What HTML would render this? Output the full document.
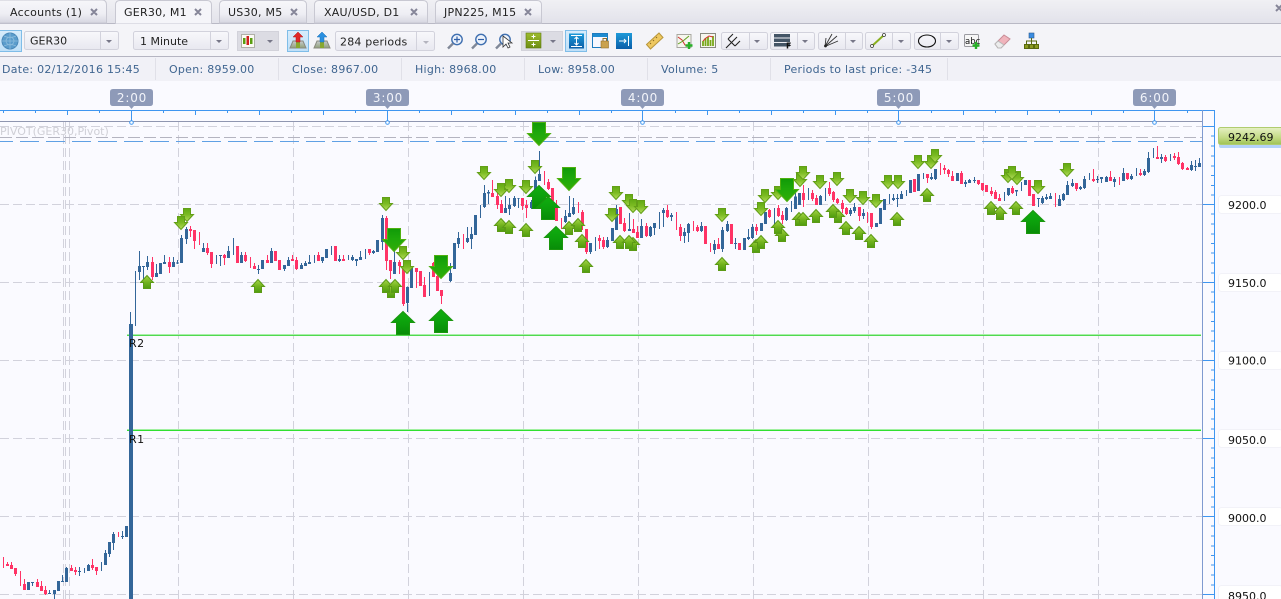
<!DOCTYPE html>
<html><head><meta charset="utf-8"><title>Chart</title>
<style>
html,body{margin:0;padding:0;background:#fafaff;width:1281px;height:599px;overflow:hidden}
svg{display:block;position:absolute;left:0;top:0}
text{font-family:"DejaVu Sans","Liberation Sans",sans-serif;font-size:11px}
.t{fill:#222}
.tt{fill:#222;letter-spacing:.25px}
.i{fill:#3f6590;letter-spacing:.27px}
.x{stroke:#858598;stroke-width:2;fill:none}
.btn{fill:url(#bg);stroke:#d2d2dc}
.sep{stroke:#d2d2dc}
.ar{fill:#777788}
.tl{fill:#f2f4fa;font-size:12px;letter-spacing:.8px;text-anchor:middle}
.pl{fill:#111;font-size:11px}
</style></head><body>
<svg width="1281" height="599" viewBox="0 0 1281 599" xmlns="http://www.w3.org/2000/svg">
<defs>
<linearGradient id="tb" x1="0" y1="0" x2="0" y2="1"><stop offset="0" stop-color="#f0f0f4"/><stop offset="1" stop-color="#e2e2ea"/></linearGradient>
<linearGradient id="tab" x1="0" y1="0" x2="0" y2="1"><stop offset="0" stop-color="#f7f7fa"/><stop offset=".6" stop-color="#eeeef4"/><stop offset="1" stop-color="#d6d6e0"/></linearGradient>
<linearGradient id="bg" x1="0" y1="0" x2="0" y2="1"><stop offset="0" stop-color="#f8f8fb"/><stop offset="1" stop-color="#e8e8f0"/></linearGradient>
<linearGradient id="hl" x1="0" y1="0" x2="0" y2="1"><stop offset="0" stop-color="#d8ecfb"/><stop offset="1" stop-color="#bfe0f8"/></linearGradient>
<linearGradient id="gd" x1="0" y1="0" x2="0" y2="1"><stop offset="0" stop-color="#62aa14"/><stop offset=".5" stop-color="#7dbc24"/><stop offset="1" stop-color="#b6de5e"/></linearGradient>
<linearGradient id="gu" x1="0" y1="0" x2="0" y2="1"><stop offset="0" stop-color="#a6d84a"/><stop offset=".5" stop-color="#74b41e"/><stop offset="1" stop-color="#4f9c10"/></linearGradient>
<linearGradient id="bd" x1="0" y1="0" x2="0" y2="1"><stop offset="0" stop-color="#109a08"/><stop offset=".45" stop-color="#1ea80a"/><stop offset="1" stop-color="#30ae08"/></linearGradient>
<linearGradient id="bu" x1="0" y1="0" x2="0" y2="1"><stop offset="0" stop-color="#10ae10"/><stop offset=".5" stop-color="#0ca00c"/><stop offset="1" stop-color="#088c08"/></linearGradient>
<linearGradient id="pg" x1="0" y1="0" x2="0" y2="1"><stop offset="0" stop-color="#e6f0c4"/><stop offset=".6" stop-color="#c2da84"/><stop offset="1" stop-color="#9fc254"/></linearGradient>
<linearGradient id="blu" x1="0" y1="0" x2="0" y2="1"><stop offset="0" stop-color="#1e9ad8"/><stop offset="1" stop-color="#0a5ea8"/></linearGradient>
<linearGradient id="grn" x1="0" y1="0" x2="0" y2="1"><stop offset="0" stop-color="#9dbb2e"/><stop offset="1" stop-color="#6e8e14"/></linearGradient>
<linearGradient id="sl" x1="0" y1="0" x2="0" y2="1"><stop offset="0" stop-color="#c8ccd0"/><stop offset="1" stop-color="#90a078"/></linearGradient>
<g id="sd"><polygon points="3.5,.5 10.5,.5 10.5,6.5 13.5,6.5 7,13.5 .5,6.5 3.5,6.5" fill="url(#gd)" stroke="#639f18"/></g>
<g id="su"><polygon points="3.5,13.5 10.5,13.5 10.5,7.5 13.5,7.5 7,.5 .5,7.5 3.5,7.5" fill="url(#gu)" stroke="#5c9a16"/></g>
<g id="bdn"><polygon points="5.5,.5 18.5,.5 18.5,11.5 23.5,11.5 12,23.5 .5,11.5 5.5,11.5" fill="url(#bd)" stroke="#4fb010"/></g>
<g id="bup"><polygon points="5.5,23.5 18.5,23.5 18.5,11.5 23.5,11.5 12,.5 .5,11.5 5.5,11.5" fill="url(#bu)" stroke="#1a960e"/></g>
<g id="mag"><circle cx="10" cy="6.5" r="5.2" fill="#eef3fb" stroke="#3f6fb0" stroke-width="1.4"/><path d="M6 10.5L1 15.5" stroke="#808898" stroke-width="2.4"/></g>
<g id="house"><path d="M1 14L4 7H14L17 14Z" fill="url(#sl)" stroke="#8a8a80"/><rect x="7" y="8" width="4" height="6" fill="#88a830"/></g>
</defs>

<!-- chart background -->
<rect width="1281" height="599" fill="#fafaff"/>

<!-- tab bar -->
<rect width="1281" height="24" fill="url(#tb)"/>
<path d="M0 23.5H1281" stroke="#b9b9c5"/>
<path d="M-2 23V0H102Q106.500 0 106.500 5V23Z" fill="url(#tab)" stroke="#c8c8d2"/>
<path d="M219.500 23V5Q219.500 .5 224 .5H302Q306.500 .5 306.500 5V23Z" fill="url(#tab)" stroke="#c8c8d2"/>
<path d="M314.500 23V5Q314.500 .5 319 .5H423Q427.500 .5 427.500 5V23Z" fill="url(#tab)" stroke="#c8c8d2"/>
<path d="M435.500 23V5Q435.500 .5 440 .5H537Q541.500 .5 541.500 5V23Z" fill="url(#tab)" stroke="#c8c8d2"/>
<path d="M115.500 24V5Q115.500 .5 120 .5H207Q211.500 .5 211.500 5V24Z" fill="#f5f5f9" stroke="#c8c8d2"/>
<text x="10" y="16" class="tt">Accounts (1)</text>
<text x="124" y="16" class="tt">GER30, M1</text>
<text x="228" y="16" class="tt">US30, M5</text>
<text x="324" y="16" class="tt">XAU/USD, D1</text>
<text x="444" y="16" class="tt">JPN225, M15</text>
<path class="x" d="M91 9l6 6m0-6l-6 6M195 9l6 6m0-6l-6 6M291 9l6 6m0-6l-6 6M411 9l6 6m0-6l-6 6M525 9l6 6m0-6l-6 6M1276 5l6 6m0-6l-6 6"/>

<!-- toolbar -->
<rect y="24" width="1281" height="32" fill="#f4f4f8"/>
<path d="M0 56.500H1281" stroke="#b5b5c2"/>
<rect x="-2" y="30.500" width="23.500" height="21" fill="url(#hl)" stroke="#7fbde8"/>
<circle cx="10" cy="41" r="8" fill="#5a9ccc" stroke="#4a88b8"/>
<path d="M10 33V49M2 41H18M4 36Q10 39 16 36M4 46Q10 43 16 46" stroke="#8cbcdc" fill="none" stroke-width=".8"/>
<circle cx="10" cy="41" r="4" fill="none" stroke="#8cbcdc" stroke-width=".8"/>

<rect x="24.500" y="31.500" height="18" width="94" rx="2" class="btn"/><path class="sep" d="M100.500 32V49"/><path class="ar" d="M106 40h6l-3 3z"/>
<text x="30" y="44.500" class="t">GER30</text>
<rect x="133.500" y="31.500" height="18" width="95" rx="2" class="btn"/><path class="sep" d="M210.500 32V49"/><path class="ar" d="M216 40h6l-3 3z"/>
<text x="140" y="45" class="t">1 Minute</text>
<rect x="237.500" y="31.500" width="41" height="19" fill="#dcdce3" stroke="#d2d2da"/>
<rect x="241.500" y="34.500" width="13" height="13" fill="#fbfbf4" stroke="#b0b0a8"/>
<rect x="243" y="38" width="2.500" height="6" fill="#5a9e10"/><rect x="246.500" y="36" width="2.500" height="9" fill="#d02020"/><rect x="250" y="38" width="2.500" height="6" fill="#5a9e10"/>
<path class="ar" d="M267 40h6l-3 3z"/>

<rect x="287.500" y="30.500" width="21" height="21" fill="url(#hl)" stroke="#7fbde8"/>
<use href="#house" x="289" y="34"/><path d="M298 32l5 5h-3v5h-4v-5h-3z" fill="#e02828" stroke="#b01818" stroke-width=".5"/>
<use href="#house" x="313" y="34"/><path d="M322 32l5 5h-3v5h-4v-5h-3z" fill="#2a90e0" stroke="#1a70b8" stroke-width=".5"/>
<rect x="335.500" y="31.500" height="19" width="99" rx="2" class="btn"/><path class="sep" d="M416.500 32V50"/><path class="ar" d="M423 41h6l-3 3z" fill-opacity=".5"/>
<text x="340" y="45.500" class="t" style="letter-spacing:.2px">284 periods</text>

<use href="#mag" x="447" y="33"/><path d="M457 36.500v6M454 39.500h6" stroke="#2f5fa8" stroke-width="1.200"/>
<use href="#mag" x="471" y="33"/><path d="M478 39.500h6" stroke="#2f5fa8" stroke-width="1.200"/>
<use href="#mag" x="495" y="33"/><path d="M503 36l0 11 3-3 2 4 2-1-2-4h4z" fill="#fff" stroke="#333" stroke-width=".8"/>

<rect x="521.500" y="31.500" width="41" height="19" fill="#dcdce3" stroke="#d2d2da"/>
<rect x="526" y="33" width="15" height="15" fill="url(#grn)" stroke="#5e7a10" stroke-width=".6"/>
<path d="M528 40.500H539" stroke="#fff"/><path d="M533.500 34.500v4M531.500 36.500h4M533.500 42.500v4M531.500 44.500h4" stroke="#fff"/>
<path class="ar" d="M550 40h6l-3 3z"/>
<rect x="565.500" y="30.500" width="21" height="21" fill="url(#hl)" stroke="#7fbde8"/>
<rect x="569" y="33.500" width="15" height="15" fill="url(#blu)"/>
<path d="M571 35.500H582M571 46.500H582M576.500 37v8M574.500 39l2-2 2 2M574.500 43l2 2 2-2" stroke="#fff" fill="none"/>
<rect x="592.500" y="33.500" width="15" height="14" fill="#f8f8ff" stroke="#1f7cc0"/><rect x="593" y="34" width="14" height="3" fill="#1f8cd0"/>
<rect x="601" y="41" width="7.500" height="7" fill="#caa24e" stroke="#93702a" stroke-width=".6"/><path d="M603 41v-2.500h3.500V41" fill="none" stroke="#93702a"/>
<rect x="616" y="33" width="16" height="16" fill="url(#blu)"/>
<path d="M619 41H626M624 39l2 2-2 2M628.500 36V46" stroke="#fff" fill="none"/>
<path d="M646.500 44.500L659 33l4 4.500L650.500 49Z" fill="#eec860" stroke="#b8963c"/>
<path d="M651 44l-1-1M654 41l-1-1M657 38l-1-1" stroke="#8a6a20"/>
<rect x="677" y="34.500" width="14" height="13" fill="#f6f6ee" stroke="#a8a8a0"/>
<path d="M678 37l4 3 3 5 3 1" stroke="#d03030" fill="none"/><path d="M678 44l5-3 6-5" stroke="#60a020" fill="none"/>
<path d="M689 42v7M685.500 45.500h7" stroke="#28b028" stroke-width="2.400"/>
<rect x="700.500" y="33.500" width="15" height="14" fill="#f6f6ee" stroke="#8a8a80"/>
<path d="M703 46v-5M705.500 46v-8M708 46v-9M710.500 46v-6M713 46v-10" stroke="#78a818" stroke-width="1.800"/><path d="M703 41l3-3 3-2 4 1" stroke="#d83030" fill="none"/>

<rect x="721.500" y="32.500" width="46" height="17" rx="2" class="btn"/><path class="sep" d="M749.500 33V49"/><path class="ar" d="M754 40h6l-3 3z"/>
<path d="M726 48L731.500 42.500M728 39L735 46M728 39L733 34M731.500 42.500L737 37M735 46L740 41" stroke="#222" fill="none" stroke-width="1.100"/>
<rect x="770.500" y="32.500" width="44" height="17" rx="2" class="btn"/><path class="sep" d="M797.500 33V49"/><path class="ar" d="M802 40h6l-3 3z"/>
<rect x="774" y="34" width="16" height="3.500" fill="#445566"/><rect x="774" y="38.500" width="16" height="3.500" fill="#445566"/><rect x="774" y="43" width="16" height="3.500" fill="#445566"/>
<text x="786" y="48.500" style="font-size:8px;font-weight:bold" fill="#111">F</text>
<rect x="818.500" y="32.500" width="44" height="17" rx="2" class="btn"/><path class="sep" d="M845.500 33V49"/><path class="ar" d="M850 40h6l-3 3z"/>
<path d="M825 46.500L838 41M825 46.500L837 36M825 46.500L832 34M825 46.500L826 38" stroke="#333" fill="none" stroke-width=".9"/><circle cx="825.500" cy="46" r="1.400" fill="#222"/>
<rect x="865.500" y="32.500" width="45" height="17" rx="2" class="btn"/><path class="sep" d="M892.500 33V49"/><path class="ar" d="M898 40h6l-3 3z"/>
<path d="M872 46L884 35" stroke="#8ab020" stroke-width="2"/><circle cx="872" cy="46" r="1.500" fill="#fff" stroke="#333" stroke-width=".7"/><circle cx="884" cy="35" r="1.500" fill="#fff" stroke="#333" stroke-width=".7"/>
<rect x="914.500" y="32.500" width="44" height="17" rx="2" class="btn"/><path class="sep" d="M940.500 33V49"/><path class="ar" d="M946 40h6l-3 3z"/>
<ellipse cx="927" cy="41" rx="8.500" ry="6" fill="none" stroke="#111" stroke-width="1.100"/>
<rect x="964.500" y="34.500" width="14" height="12" rx="1" fill="#f6f6f6" stroke="#9a9aa0"/>
<text x="965" y="44" style="font-size:8.500px" fill="#111">abc</text>
<path d="M976 42v7M972.500 45.500h7" stroke="#28b028" stroke-width="2.400"/>
<path d="M995 44l9-9 6 4-9 9h-3z" fill="#f0b4bc" stroke="#c88c96"/><path d="M995 44l3-3 6 4-3 3h-3z" fill="#ececec" stroke="#b8b8b8"/>
<rect x="1029" y="33" width="5" height="5" fill="#3a8ce0" stroke="#2a5a90" stroke-width=".6"/>
<path d="M1031.500 38v3M1026.500 44v-3H1036.500v3M1031.500 41v3" stroke="#5a6a10" fill="none"/>
<rect x="1024.500" y="44.500" width="4" height="4" fill="#8a9a20" stroke="#5a6a10"/><rect x="1029.500" y="44.500" width="4" height="4" fill="#8a9a20" stroke="#5a6a10"/><rect x="1034.500" y="44.500" width="4" height="4" fill="#8a9a20" stroke="#5a6a10"/>

<!-- info bar -->
<rect y="57" width="1281" height="24" fill="#f1f1f7"/>
<path d="M155.500 58V80M278.500 58V80M401.500 58V80M524.500 58V80M647.500 58V80M770.500 58V80M947.500 58V80" stroke="#e0e0e8"/>
<text x="2" y="73" class="i">Date: 02/12/2016 15:45</text>
<text x="169" y="73" class="i">Open: 8959.00</text>
<text x="292" y="73" class="i">Close: 8967.00</text>
<text x="415" y="73" class="i">High: 8968.00</text>
<text x="538" y="73" class="i">Low: 8958.00</text>
<text x="661" y="73" class="i">Volume: 5</text>
<text x="784" y="73" class="i">Periods to last price: -345</text>

<!-- grid -->
<g stroke="#d2d2dc" fill="none" stroke-dasharray="9 4" shape-rendering="crispEdges">
<path d="M0 126.500H1202M0 204.500H1202M0 282.500H1202M0 360.500H1202M0 438.500H1202M0 516.500H1202M0 594.500H1202"/>
<path d="M63.500 122V599M65.500 122V599M69.500 122V599M178.500 122V599M293.500 122V599M408.500 122V599M523.500 122V599M638.500 122V599M753.500 122V599M868.500 122V599M983.500 122V599M1098.500 122V599"/>
</g>
<path d="M0 137.500H1202" stroke="#b4b4c0" stroke-dasharray="12 4" shape-rendering="crispEdges"/>
<path d="M0 141.500H1202" stroke="#5fa0e4" stroke-dasharray="19 7" stroke-dashoffset="6" shape-rendering="crispEdges"/>
<text x="0" y="135" fill="#cfcfd6">PIVOT(GER30,Pivot)</text>

<!-- time axis -->
<g shape-rendering="crispEdges">
<path d="M0 110.500H1214.500" stroke="#3f96f0"/>
<path d="M0 121.500H1203" stroke="#8f96b0"/>
<path stroke="#3f96f0" d="M3.500 110v3M35.500 110v3M67.500 110v5M99.500 110v3M131.500 110v12M163.500 110v3M195.500 110v5M227.500 110v3M259.500 110v5M291.500 110v3M323.500 110v5M355.500 110v3M387.500 110v12M419.500 110v3M451.500 110v5M483.500 110v3M515.500 110v5M547.500 110v3M579.500 110v5M611.500 110v3M642.500 110v12M675.500 110v3M707.500 110v5M739.500 110v3M771.500 110v5M803.500 110v3M835.500 110v5M867.500 110v3M898.500 110v12M931.500 110v3M963.500 110v5M995.500 110v3M1027.500 110v5M1059.500 110v3M1091.500 110v5M1123.500 110v3M1154.500 110v12M1187.500 110v3"/>
</g>
<g fill="#fff" stroke="#3f96f0"><circle cx="131.500" cy="122.500" r="1.800"/><circle cx="387.500" cy="122.500" r="1.800"/><circle cx="642.500" cy="122.500" r="1.800"/><circle cx="898.500" cy="122.500" r="1.800"/><circle cx="1154.500" cy="122.500" r="1.800"/></g>
<g fill="#8e9ab8">
<path d="M113 89h37q3 0 3 3v11q0 3-3 3h-16l-2.500 3-2.500-3h-16q-3 0-3-3V92q0-3 3-3z"/>
<path d="M113 89h37q3 0 3 3v11q0 3-3 3h-16l-2.500 3-2.500-3h-16q-3 0-3-3V92q0-3 3-3z" transform="translate(256 0)"/>
<path d="M113 89h37q3 0 3 3v11q0 3-3 3h-16l-2.500 3-2.500-3h-16q-3 0-3-3V92q0-3 3-3z" transform="translate(511 0)"/>
<path d="M113 89h37q3 0 3 3v11q0 3-3 3h-16l-2.500 3-2.500-3h-16q-3 0-3-3V92q0-3 3-3z" transform="translate(767 0)"/>
<path d="M113 89h37q3 0 3 3v11q0 3-3 3h-16l-2.500 3-2.500-3h-16q-3 0-3-3V92q0-3 3-3z" transform="translate(1023 0)"/>
</g>
<text x="132" y="102" class="tl">2:00</text><text x="388" y="102" class="tl">3:00</text><text x="643" y="102" class="tl">4:00</text><text x="899" y="102" class="tl">5:00</text><text x="1155" y="102" class="tl">6:00</text>

<!-- pivots -->
<g shape-rendering="crispEdges">
<path d="M127 334.500H1201" stroke="#a8f0a8"/><path d="M127 335.500H1201" stroke="#50d850"/>
<path d="M127 429.500H1201" stroke="#a0f0a0"/><path d="M127 430.500H1201" stroke="#30e030"/>
</g>

<!-- candles -->
<g shape-rendering="crispEdges" fill="none">
<rect x="129" y="324" width="4" height="275" fill="#336699"/>
<path d="M130.500 312V325" stroke="#336699"/>
<!-- A -->
<g transform="translate(120 120) scale(.33333)">
<path stroke="#336699" stroke-width="3" d="M46 453V618M58 393V480M70 438V480M82 408V450M109 432V471M133 405V432M160 411V441M172 420V432M184 345V429M199 321V372M250 369V396M289 405V432M301 405V438M325 378V414M340 354V405M364 396V429M415 435V462M454 384V429M493 435V453M505 411V438M544 429V447M556 423V438M568 405V432M583 405V429M607 411V429M634 378V405M658 405V426M685 405V420M697 405V423M709 417V438M721 393V420M736 387V417M760 390V402M787 285V390M823 390V462M862 500V576M928 456V528M991 429V486M1015 336V384"/>
<path stroke="#336699" stroke-width="9" d="M58 438V456M70 438V441M82 426V441M109 459V471M121 429V462M133 426V432M160 426V441M172 428V431M184 354V429M199 327V357M250 384V396M301 405V408M325 393V414M364 405V429M415 447V450M427 420V447M454 393V429M493 435V447M505 420V438M544 435V447M556 429V438M568 426V432M607 411V423M619 387V414M658 417V423M697 411V420M709 417V423M721 411V420M760 393V399M772 360V396M787 294V366M823 426V462M862 501V549M874 444V504M991 459V483M1003 369V447M1015 354V372"/>
<path stroke="#ff3366" stroke-width="3" d="M97 411V480M148 411V459M211 318V351M223 330V387M238 336V375M262 369V405M274 396V444M313 402V435M376 396V426M391 411V444M403 429V447M442 405V429M517 405V423M529 411V450M595 396V423M670 405V423M748 387V405M799 288V450M811 420V477M838 420V462M850 444V558M889 444V504M913 471V531M940 426V471M952 444V513M964 510V552"/>
<path stroke="#ff3366" stroke-width="9" d="M97 426V471M148 426V441M211 327V333M223 330V363M262 384V399M274 396V432M313 405V414M352 378V429M376 405V423M403 438V447M442 420V429M466 393V423M478 420V450M517 417V423M529 420V447M595 405V423M646 378V423M670 417V423M748 387V399M799 294V423M811 420V453M838 426V438M850 444V552M889 444V456M901 453V498M913 495V531M940 429V471M952 468V513M964 510V528"/>
</g>
<!-- B -->
<g transform="translate(460 120) scale(.33333)">
<path stroke="#336699" stroke-width="3" d="M22 321V369M34 321V387M61 255V294M73 195V264M85 210V252M136 228V279M148 234V285M163 228V261M175 234V264M214 240V267M226 170V240M238 93V183M316 270V309M328 228V291M340 234V285M391 369V402M406 351V393M442 351V384M469 255V330M508 279V333M544 297V354M571 318V351M583 309V345M598 276V327M610 264V321M634 279V303M673 324V369M685 309V366M724 306V336M763 360V402M787 321V396M802 303V336M826 354V387M865 327V360M877 312V357M943 264V312M979 261V303M994 243V276M1006 219V267"/>
<path stroke="#336699" stroke-width="9" d="M22 354V366M34 342V357M46 285V345M73 219V261M85 216V220M136 264V279M148 255V267M163 234V258M175 234V236M214 246V264M226 180V240M238 162V183M316 288V306M328 279V291M340 261V282M391 369V396M442 360V381M457 324V363M469 267V330M508 327V333M544 318V354M571 321V348M583 309V324M610 270V279M634 285V291M673 336V348M685 312V339M724 318V333M763 372V390M787 330V387M802 312V333M826 369V372M853 354V390M865 351V357M877 321V354M904 309V333M916 276V312M979 264V300M1006 230V267M1018 219V255"/>
<path stroke="#ff3366" stroke-width="3" d="M10 342V387M97 180V231M112 210V267M124 240V279M187 234V270M199 240V294M253 153V195M265 177V210M289 240V303M304 294V327M355 246V279M367 270V330M379 327V402M418 345V387M430 351V387M493 294V336M520 297V339M532 318V354M559 309V351M622 255V294M649 276V330M661 312V363M700 303V333M712 315V336M751 369V396M775 354V387M889 312V345M928 267V294M955 255V291M967 273V312"/>
<path stroke="#ff3366" stroke-width="9" d="M97 219V231M112 228V255M124 252V279M187 234V258M199 255V264M265 186V207M277 204V243M289 264V303M367 276V318M379 327V396M418 354V363M430 360V381M481 261V312M493 309V333M520 327V339M532 336V354M559 318V348M622 270V291M661 321V348M712 321V333M736 318V372M775 372V387M814 312V372M838 369V390M889 321V333M928 270V291M955 264V288M967 285V300"/>
</g>
<!-- C -->
<g transform="translate(800 120) scale(.33333)">
<path stroke="#336699" stroke-width="3" d="M25 204V240M61 225V255M76 204V243M151 264V288M163 249V279M190 267V297M229 309V321M241 264V312M268 222V252M280 222V243M292 222V261M304 213V237M319 210V228M370 159V177M394 159V180M406 147V180M472 159V183M496 180V201M508 177V189M523 171V189M613 216V243M625 204V228M649 210V228M664 186V213M715 234V261M727 228V252M739 222V240M751 219V237M778 225V258M790 219V243M802 183V225M817 177V201M841 198V210M853 168V207M868 159V180M892 168V189M904 171V189M919 168V186M943 171V201M970 144V183M994 162V180M1009 144V168M1033 147V168M1045 96V159M1060 84V114M1084 102V129M1111 102V123M1174 123V153M1186 120V153M1198 114V141"/>
<path stroke="#336699" stroke-width="9" d="M61 228V255M151 270V282M163 261V273M190 279V288M229 309V321M241 264V312M253 237V270M280 234V240M292 234V237M304 222V237M331 180V219M355 162V213M394 171V177M406 147V177M472 159V183M496 186V192M508 180V189M523 180V183M625 204V225M649 210V214M676 180V195M715 234V237M727 234V249M739 231V237M751 228V237M778 237V258M790 222V240M802 195V225M817 189V198M841 201V207M853 177V204M892 177V180M904 171V177M919 171V186M943 177V186M970 159V183M994 168V177M1033 153V165M1045 114V156M1084 111V117M1174 135V150M1186 138V141M1198 129V141"/>
<path stroke="#ff3366" stroke-width="3" d="M10 195V261M37 210V243M49 225V255M88 186V228M100 213V246M112 234V252M127 240V279M139 261V285M178 261V303M202 276V309M214 279V327M382 162V189M421 129V165M433 135V162M445 147V171M457 153V183M484 153V192M535 180V195M547 189V213M574 201V228M586 210V237M598 222V243M637 198V222M766 219V261M829 189V213M880 147V186M931 153V183M958 171V195M982 159V180M1021 147V168M1072 78V117M1096 105V126M1123 99V120M1135 96V135M1147 126V150M1162 141V150"/>
<path stroke="#ff3366" stroke-width="9" d="M10 219V240M37 219V237M49 234V255M88 204V222M100 216V240M112 237V249M127 249V267M139 264V282M178 261V288M214 279V321M343 177V216M382 162V174M433 144V150M445 150V162M457 168V183M484 159V192M535 180V192M547 189V210M559 195V216M574 213V222M586 216V237M598 234V243M637 204V219M688 180V228M700 222V258M829 189V207M880 177V183M931 171V183M982 159V177M1021 159V165M1072 111V117M1096 111V123M1123 108V114M1135 111V132M1147 129V147M1162 144V150"/>
</g>
<!-- D -->
<g transform="translate(0 420) scale(.33333)">
<path stroke="#336699" stroke-width="3" d="M97 486V498M148 510V522M163 510V537M187 465V486M199 441V486M238 441V468M253 444V459M265 432V453M304 426V453M316 390V435M328 366V411M340 336V390M367 333V357"/>
<path stroke="#336699" stroke-width="9" d="M85 486V510M97 486V489M148 519V522M163 510V522M175 483V513M187 483V486M199 444V486M238 453V456M265 435V453M316 399V435M328 366V402M340 342V369M367 348V351M379 318V351"/>
<path stroke="#ff3366" stroke-width="3" d="M10 411V444M22 426V438M34 426V447M46 444V468M61 453V498M73 477V510M112 477V501M124 483V513M136 498V525M214 435V453M226 441V465M277 417V450M289 441V465M355 336V351"/>
<path stroke="#ff3366" stroke-width="9" d="M22 432V438M34 435V447M46 444V462M73 492V510M112 486V501M124 498V513M136 510V522M214 444V453M226 450V456M277 435V444M289 441V453"/>
</g>
</g>

<text x="129" y="347" fill="#111" letter-spacing=".5">R2</text>
<text x="129" y="443" fill="#111" letter-spacing=".5">R1</text>

<!-- arrows small -->
<use href="#su" x="140" y="275"/><use href="#su" x="251" y="279"/><use href="#su" x="384" y="284"/><use href="#su" x="379" y="279"/><use href="#su" x="388" y="279"/>
<use href="#sd" x="180" y="208"/><use href="#sd" x="174" y="216"/><use href="#sd" x="379" y="197"/><use href="#sd" x="396" y="246"/><use href="#sd" x="400" y="260"/>
<use href="#sd" x="477" y="166"/><use href="#sd" x="502" y="179"/><use href="#sd" x="494" y="183"/><use href="#sd" x="519" y="180"/><use href="#sd" x="528" y="160"/>
<use href="#su" x="494" y="218"/><use href="#su" x="502" y="220"/><use href="#su" x="519" y="223"/><use href="#su" x="562" y="221"/><use href="#su" x="571" y="218"/><use href="#su" x="575" y="234"/><use href="#su" x="579" y="259"/>
<use href="#su" x="626" y="237"/><use href="#su" x="613" y="235"/><use href="#su" x="622" y="235"/><use href="#su" x="715" y="257"/>
<use href="#sd" x="609" y="186"/><use href="#sd" x="605" y="208"/><use href="#sd" x="622" y="194"/><use href="#sd" x="626" y="199"/><use href="#sd" x="634" y="200"/><use href="#sd" x="715" y="208"/>
<use href="#su" x="749" y="239"/><use href="#su" x="754" y="235"/><use href="#su" x="775" y="228"/><use href="#su" x="771" y="220"/>
<use href="#sd" x="754" y="202"/><use href="#sd" x="758" y="189"/><use href="#sd" x="771" y="186"/>
<use href="#sd" x="793" y="173"/><use href="#sd" x="796" y="166"/><use href="#sd" x="813" y="175"/><use href="#sd" x="830" y="172"/><use href="#sd" x="843" y="189"/><use href="#sd" x="856" y="191"/><use href="#sd" x="869" y="194"/><use href="#sd" x="881" y="175"/><use href="#sd" x="891" y="175"/><use href="#sd" x="911" y="155"/><use href="#sd" x="924" y="155"/><use href="#sd" x="928" y="149"/>
<use href="#su" x="792" y="212"/><use href="#su" x="796" y="212"/><use href="#su" x="809" y="209"/><use href="#su" x="831" y="209"/><use href="#su" x="826" y="204"/><use href="#su" x="839" y="221"/><use href="#su" x="852" y="226"/><use href="#su" x="864" y="234"/><use href="#su" x="890" y="212"/><use href="#su" x="920" y="188"/>
<use href="#sd" x="1001" y="169"/><use href="#sd" x="1010" y="171"/><use href="#sd" x="1005" y="166"/><use href="#sd" x="1031" y="180"/><use href="#sd" x="1060" y="163"/>
<use href="#su" x="984" y="201"/><use href="#su" x="993" y="206"/><use href="#su" x="1009" y="201"/>
<!-- arrows big -->
<use href="#bdn" x="382" y="228"/><use href="#bdn" x="429" y="255"/><use href="#bup" x="391" y="311"/><use href="#bup" x="429" y="309"/>
<use href="#bdn" x="527" y="122"/><use href="#bdn" x="557" y="167"/><use href="#bup" x="527" y="185"/><use href="#bup" x="536" y="196"/><use href="#bup" x="544" y="226"/>
<use href="#bdn" x="775" y="178"/><use href="#bup" x="1021" y="210"/>

<!-- right axis -->
<g shape-rendering="crispEdges">
<path d="M1202.500 110V599" stroke="#7f9ad0"/>
<path d="M1214.500 110V599" stroke="#3f96f0"/>
<path d="M1203 126.500H1215M1203 204.500H1215M1203 282.500H1215M1203 360.500H1215M1203 438.500H1215M1203 516.500H1215M1203 594.500H1215" stroke="#3f96f0"/>
<path stroke="#3f96f0" d="M1211 136h3M1211 146h3M1211 156h3M1211 166h3M1211 175.500h3M1211 185.500h3M1211 195h3M1211 214h3M1211 224h3M1211 234h3M1211 243.500h3M1211 253h3M1211 263h3M1211 273h3M1211 292h3M1211 302h3M1211 312h3M1211 321.500h3M1211 331h3M1211 341h3M1211 351h3M1211 370h3M1211 380h3M1211 390h3M1211 399.500h3M1211 409h3M1211 419h3M1211 429h3M1211 448h3M1211 458h3M1211 468h3M1211 477.500h3M1211 487h3M1211 497h3M1211 507h3M1211 526h3M1211 536h3M1211 546h3M1211 555.500h3M1211 565h3M1211 575h3M1211 585h3"/>
</g>
<rect x="1219" y="128" width="64" height="20" rx="2" fill="#b4d2fa"/>
<rect x="1218.500" y="127.500" width="66" height="17" rx="2" fill="url(#pg)" stroke="#b0cc70"/>
<g fill="#fff" stroke="#f2f2f8">
<rect x="1218.500" y="195.500" width="64" height="18" rx="3"/>
<rect x="1218.500" y="273.500" width="64" height="18" rx="3"/>
<rect x="1218.500" y="351.500" width="64" height="18" rx="3"/>
<rect x="1218.500" y="429.500" width="64" height="18" rx="3"/>
<rect x="1218.500" y="507.500" width="64" height="18" rx="3"/>
<rect x="1218.500" y="585.500" width="64" height="18" rx="3"/>
</g>
<text x="1228" y="141" class="pl">9242.69</text>
<text x="1228" y="209" class="pl">9200.0</text>
<text x="1228" y="287" class="pl">9150.0</text>
<text x="1228" y="364.500" class="pl">9100.0</text>
<text x="1228" y="444" class="pl">9050.0</text>
<text x="1228" y="522" class="pl">9000.0</text>
<text x="1228" y="600" class="pl">8950.0</text>
</svg>
</body></html>
